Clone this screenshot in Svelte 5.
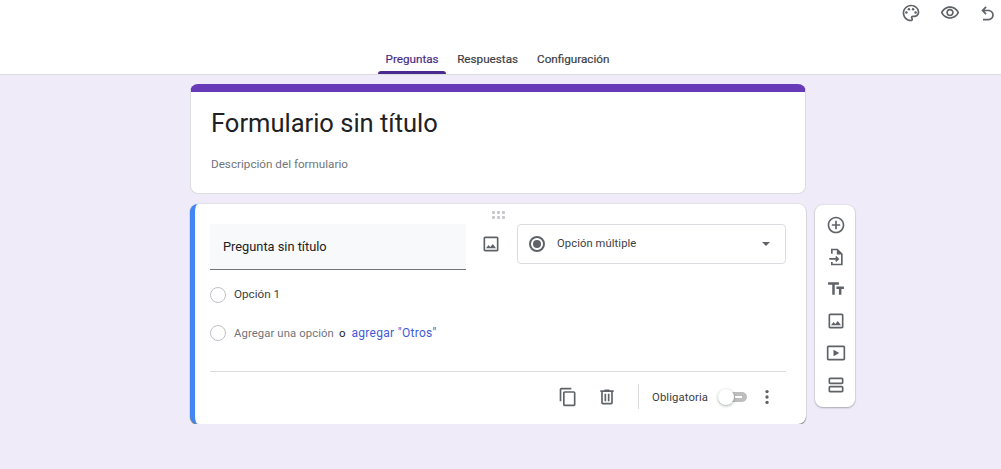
<script>
  const tools = [
    'M13 7h-2v4H7v2h4v4h2v-4h4v-2h-4V7zm-1-5C6.49 2 2 6.49 2 12s4.49 10 10 10 10-4.49 10-10S17.51 2 12 2zm0 18c-4.41 0-8-3.59-8-8s3.59-8 8-8 8 3.59 8 8-3.59 8-8 8z',
    'M14 2H6v6h2V4h5v5h5v11H8v-2H6v4h14V8l-6-6zM11 16.5l1.4 1.4L16 14.3l-3.6-3.6-1.4 1.4 1.2 1.2H4v2h8.2l-1.2 1.2z',
    'M2.5 4v3h5v12h3V7h5V4h-13zm19 5h-9v3h3v7h3v-7h3V9z',
    'M19 5v14H5V5h14m0-2H5c-1.1 0-2 .9-2 2v14c0 1.1.9 2 2 2h14c1.1 0 2-.9 2-2V5c0-1.1-.9-2-2-2zm-4.86 8.86l-3 3.87L9 13.14 6 17h12l-3.86-5.14z',
    'M21 3H3c-1.1 0-2 .9-2 2v14c0 1.1.9 2 2 2h18c1.1 0 2-.9 2-2V5c0-1.1-.9-2-2-2zm0 16H3V5h18v14zM9 8v8l7-4-7-4z',
    'M19 13H5c-1.1 0-2 .9-2 2v4c0 1.1.9 2 2 2h14c1.1 0 2-.9 2-2v-4c0-1.1-.9-2-2-2zm0 6H5v-4h14v4zM19 3H5c-1.1 0-2 .9-2 2v4c0 1.1.9 2 2 2h14c1.1 0 2-.9 2-2V5c0-1.1-.9-2-2-2zm0 6H5V5h14v4z'
  ];
  const imageIcon = tools[3];
</script>

<header class="header">
  <div class="actions">
    <svg class="ico palette" viewBox="0 0 24 24"><path d="M12 2C6.49 2 2 6.49 2 12s4.49 10 10 10c1.38 0 2.5-1.12 2.5-2.5 0-.61-.23-1.2-.64-1.67-.08-.1-.13-.21-.13-.33 0-.28.22-.5.5-.5H16c3.31 0 6-2.69 6-6 0-4.96-4.49-9-10-9zm4 13h-1.77c-1.38 0-2.5 1.12-2.5 2.5 0 .61.22 1.19.63 1.65.06.07.14.19.14.35 0 .28-.22.5-.5.5-4.41 0-8-3.59-8-8s3.59-8 8-8 8 3.14 8 7c0 2.21-1.79 4-4 4z"/><circle cx="6.5" cy="11.5" r="1.5"/><circle cx="9.5" cy="7.5" r="1.5"/><circle cx="14.5" cy="7.5" r="1.5"/><circle cx="17.5" cy="11.5" r="1.5"/></svg>
    <svg class="ico" viewBox="0 0 24 24"><path d="M12 6c3.79 0 7.17 2.13 8.82 5.5C19.17 14.87 15.79 17 12 17s-7.17-2.13-8.82-5.5C4.83 8.13 8.21 6 12 6m0-2C7 4 2.73 7.11 1 11.5 2.73 15.89 7 19 12 19s9.27-3.11 11-7.5C21.27 7.11 17 4 12 4zm0 5c1.38 0 2.5 1.12 2.5 2.5S13.38 14 12 14s-2.5-1.12-2.5-2.5S10.62 9 12 9m0-2c-2.48 0-4.5 2.02-4.5 4.5S9.52 16 12 16s4.5-2.02 4.5-4.5S14.48 7 12 7z"/></svg>
    <svg class="ico" viewBox="0 0 24 24"><path d="M12.5 8H7.83l2.58-2.59L9 4 4 9l5 5 1.41-1.41L7.83 10h4.67c2.49 0 4.5 2.01 4.5 4.5S14.99 19 12.5 19H6v2h6.5c3.59 0 6.5-2.91 6.5-6.5S16.09 8 12.5 8z"/></svg>
  </div>
  <nav class="tabs">
    <span class="tab active">Preguntas</span>
    <span class="tab">Respuestas</span>
    <span class="tab">Configuración</span>
  </nav>
</header>

<main class="page">
  <div class="column">
    <section class="card title-card">
      <h1>Formulario sin título</h1>
      <p>Descripción del formulario</p>
    </section>

    <section class="card question-card">
      <div class="drag">
        {#each Array(6) as _}<i></i>{/each}
      </div>
      <div class="q-row">
        <div class="q-input">Pregunta sin título</div>
        <svg class="ico q-image" viewBox="0 0 24 24"><path d={imageIcon}/></svg>
        <div class="select">
          <span class="sel-radio"><b></b></span>
          <span class="sel-label">Opción múltiple</span>
          <span class="caret"></span>
        </div>
      </div>
      <div class="option first">
        <span class="radio"></span>
        <span class="opt-text">Opción 1</span>
      </div>
      <div class="option second">
        <span class="radio"></span>
        <span class="add">Agregar una opción</span>
        <span class="or">o</span>
        <span class="other">agregar "Otros"</span>
      </div>
      <div class="rule"></div>
      <div class="footer">
        <svg class="ico" viewBox="0 0 24 24"><path d="M16 1H4c-1.1 0-2 .9-2 2v14h2V3h12V1zm3 4H8c-1.1 0-2 .9-2 2v14c0 1.1.9 2 2 2h11c1.1 0 2-.9 2-2V7c0-1.100-.9-2-2-2zm0 16H8V7h11v14z"/></svg>
        <svg class="ico trash" viewBox="0 0 24 24"><path d="M15 4V3H9v1H4v2h1v13c0 1.100.9 2 2 2h10c1.100 0 2-.9 2-2V6h1V4h-5zm2 15H7V6h10v13zM9 8h2v9H9V8zm4 0h2v9h-2V8z"/></svg>
        <span class="divider"></span>
        <span class="req">Obligatoria</span>
        <span class="switch"><em></em><b></b></span>
        <svg class="ico more" viewBox="0 0 24 24"><circle cx="12" cy="5.500" r="2"/><circle cx="12" cy="12" r="2"/><circle cx="12" cy="18.500" r="2"/></svg>
      </div>
    </section>
  </div>

  <aside class="toolbar">
    {#each tools as d}
      <svg class="ico" viewBox="0 0 24 24"><path {d}/></svg>
    {/each}
  </aside>
</main>

<style>
  :global(body) {
    margin: 0;
    background: #f0ebf8;
    font-family: Roboto, "Liberation Sans", sans-serif;
    color: #202124;
  }
  .ico { width: 20px; height: 20px; fill: #5f6368; flex: none; display: block; }
  .header {
    height: 74px;
    background: #fff;
    border-bottom: 1px solid #dadce0;
    display: flex;
    flex-direction: column;
  }
  .actions { display: flex; justify-content: flex-end; gap: 18px; padding: 3px 3px 0 0; height: 20px; }
  .palette { margin-right: 1px; }
  .tabs { display: flex; justify-content: center; margin-top: 21px; padding-right: 4.500px; height: 30px; }
  .tab {
    padding: 0 9.500px;
    font-size: 11.700px;
    font-weight: 400;
    -webkit-text-stroke: .2px currentColor;
    line-height: 30px;
    color: #3c4043;
    position: relative;
  }
  .tab.active { color: #4b2e83; padding: 0 7.500px 0 8px; margin-right: 1.500px; }
  .tab.active::after {
    content: "";
    position: absolute;
    left: 0; right: 0; bottom: 0;
    height: 3px;
    border-radius: 3px 3px 0 0;
    background: #4b2a8f;
  }
  .page { display: flex; padding: 9px 0 0 190px; gap: 9px; align-items: flex-start; }
  .column { width: 616px; display: flex; flex-direction: column; gap: 10px; }
  .card { background: #fff; border-radius: 8px; box-sizing: border-box; }
  .title-card {
    height: 110px;
    border: 1px solid #dadce0;
    border-top: 8px solid #673ab7;
    padding: 0 20px;
  }
  h1 { margin: 14px 0 0; font-size: 25.500px; font-weight: 400; line-height: 34px; color: #202124; }
  p { margin: 16px 0 0; font-size: 11.700px; line-height: 16px; color: #70757a; }
  .question-card {
    height: 220px;
    border-left: 5px solid #4285f4;
    box-shadow: 0 1px 1px rgba(60,64,67,.7), 0 0 0 1px rgba(218,220,224,.6);
    padding: 0 20px 0 15px;
    position: relative;
  }
  .drag {
    position: absolute;
    left: 297px; top: 7px;
    display: grid;
    grid-template-columns: repeat(3, 3px);
    gap: 2px 2px;
  }
  .drag i { width: 3px; height: 3px; background: #c4c7cc; border-radius: 1px; }
  .q-row { display: flex; align-items: center; padding-top: 20px; }
  .q-input {
    width: 256px;
    height: 46px;
    box-sizing: border-box;
    background: #f8f9fa;
    border-bottom: 1px solid #70757a;
    padding: 14px 13px 0;
    font-size: 12.800px;
    line-height: 17px;
    color: #202124;
    position: relative;
  }
  .q-image { margin: 0 16px 6px 15px; width: 20px; height: 20px; }
  .select {
    width: 269px;
    height: 40px;
    box-sizing: border-box;
    border: 1px solid #dadce0;
    border-radius: 4px;
    display: flex;
    align-items: center;
    padding: 0 15px 0 11px;
    margin-bottom: 6px;
    font-size: 11.200px;
    letter-spacing: .1px;
  }
  .sel-radio {
    width: 16px; height: 16px;
    box-sizing: border-box;
    border: 2px solid #5f6368;
    border-radius: 50%;
    display: flex; align-items: center; justify-content: center;
    margin-right: 12px;
  }
  .sel-radio b { width: 8px; height: 8px; border-radius: 50%; background: #5f6368; }
  .sel-label { flex: 1; color: #3c4043; padding-bottom: 2px; }
  .caret { width: 0; height: 0; border: 4px solid transparent; border-top-color: #5f6368; border-bottom: 0; }
  .option { display: flex; align-items: center; height: 16px; }
  .option.first { margin-top: 17px; }
  .option.second { margin-top: 22px; }
  .radio {
    width: 16px; height: 16px;
    box-sizing: border-box;
    border: 1px solid #bdc1c6;
    border-radius: 50%;
    margin-right: 8px;
    flex: none;
  }
  .opt-text { font-size: 11.700px; color: #3c4043; padding-bottom: 2px; }
  .add { font-size: 11.300px; letter-spacing: .1px; color: #70757a; }
  .or { font-size: 11.500px; margin: 0 6px 0 5px; color: #202124; }
  .other { font-size: 12px; letter-spacing: .3px; color: #3f5bd6; margin-top: -1px; }
  .rule { height: 1px; background: #dadce0; margin-top: 30px; }
  .footer { display: flex; align-items: center; height: 49px; justify-content: flex-end; }
  .trash { margin-left: 19px; }
  .divider { width: 1px; height: 25px; background: #dadce0; margin: 0 13px 0 21px; }
  .req { font-size: 11.300px; letter-spacing: .1px; color: #3c4043; padding-top: 1px; }
  .switch {
    width: 26px; height: 10px;
    background: #bdbdbd;
    border-radius: 5px;
    margin-left: 13px;
    position: relative;
    margin-right: 10px;
  }
  .switch em {
    position: absolute;
    left: 14px; top: 4px;
    width: 7px; height: 2px;
    background: #fff;
  }
  .switch b {
    position: absolute;
    left: -3px; top: -3px;
    width: 16px; height: 16px;
    border-radius: 50%;
    background: #fff;
    box-shadow: 0 1px 3px rgba(60,64,67,.45);
  }
  .more { margin-right: 9px; }
  .toolbar {
    width: 40px;
    height: 202px;
    margin-top: 121px;
    background: #fff;
    border-radius: 8px;
    box-sizing: border-box;
    box-shadow: 0 1px 2px rgba(60,64,67,.35), 0 0 0 1px rgba(218,220,224,.5);
    display: flex;
    flex-direction: column;
    align-items: center;
    gap: 12px;
    padding: 10px 0 0 2px;
  }
</style>
